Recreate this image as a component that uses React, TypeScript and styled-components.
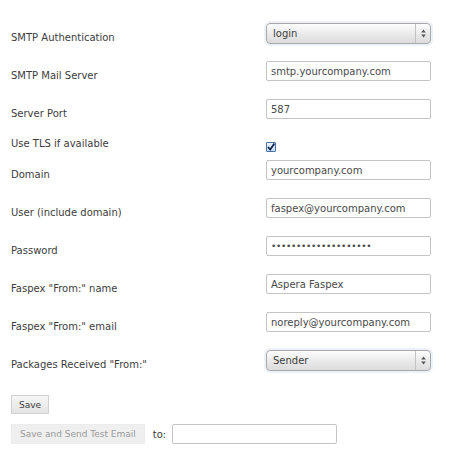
import styled, { createGlobalStyle } from 'styled-components';

const GlobalStyle = createGlobalStyle`
  html, body { margin: 0; padding: 0; background: #fff; }
  body { font-family: "DejaVu Sans", Verdana, sans-serif; font-size: 10px; color: #3d3d3d; }
`;

const Form = styled.form`
  padding: 16px 0 0 11px;
  width: 440px;
`;

const Row = styled.div<{ $compact?: boolean }>`
  display: grid;
  grid-template-columns: 255px 165px;
  height: ${p => (p.$compact ? 23 : 38)}px;
`;

const Label = styled.label<{ $compact?: boolean }>`
  padding-top: ${p => (p.$compact ? 7 : 15)}px;
  line-height: 14px;
  font-size: 10px;
  color: #3d3d3d;
`;

const Field = styled.div<{ $compact?: boolean }>`
  padding-top: ${p => (p.$compact ? 12 : 7)}px;
`;

const TextInput = styled.input`
  box-sizing: border-box;
  width: 165px;
  height: 20px;
  margin: 0;
  padding: 0 4px;
  border: 1px solid #c4c4c4;
  border-radius: 2px;
  font-family: "DejaVu Sans", Verdana, sans-serif;
  font-size: 10px;
  color: #4a4a4a;
  background: #fff;
  outline: none;
  &[type='password'] { letter-spacing: -0.3px; font-size: 9px; }
`;

const SelectBox = styled.div`
  box-sizing: border-box;
  display: flex;
  align-items: stretch;
  width: 165px;
  height: 21px;
  border: 1px solid #a9a9a9;
  border-radius: 4px;
  background: linear-gradient(#fdfdfd, #e9e9e9 55%, #dcdcdc);
  box-shadow: 0 0 0 2px rgba(214, 226, 240, 0.45);
  cursor: default;
`;

const SelectText = styled.span`
  flex: 1;
  padding-left: 6px;
  line-height: 19px;
  font-size: 10px;
  color: #3d3d3d;
`;

const SelectArrows = styled.span`
  display: flex;
  align-items: center;
  justify-content: center;
  width: 14px;
  border-left: 1px solid #c2c2c2;
`;

const CheckBox = styled.span`
  box-sizing: border-box;
  display: flex;
  align-items: center;
  justify-content: center;
  width: 10px;
  height: 10px;
  border: 1px solid #4a6fa5;
  border-radius: 1px;
  background: linear-gradient(#eaf2ff, #c9dcf5);
`;

const Actions = styled.div`
  display: flex;
  flex-direction: column;
  align-items: flex-start;
  gap: 10px;
  padding-top: 14px;
`;

const TestRow = styled.div`
  display: flex;
  align-items: center;
  gap: 8px;
`;

const Button = styled.button<{ $disabled?: boolean }>`
  box-sizing: border-box;
  height: ${p => (p.$disabled ? 20 : 19)}px;
  margin: 0;
  padding: 0 ${p => (p.$disabled ? 8 : 7)}px;
  border: 1px solid ${p => (p.$disabled ? '#ececec' : '#d0d0d0')};
  border-radius: 0;
  background: ${p => (p.$disabled ? '#efefef' : 'linear-gradient(#f6f6f6, #e4e4e4)')};
  color: ${p => (p.$disabled ? '#9a9a9a' : '#3d3d3d')};
  font-family: "DejaVu Sans", Verdana, sans-serif;
  font-size: 9px;
`;

const ToLabel = styled.span`
  margin-right: -2px;
  font-size: 10px;
  color: #3d3d3d;
`;

function Select({ value }: { value: string }) {
  return (
    <SelectBox role="listbox">
      <SelectText>{value}</SelectText>
      <SelectArrows>
        <svg width="5" height="9" viewBox="0 0 5 9">
          <path d="M2.5 0.5 L4.8 3.5 L0.2 3.5 Z" fill="#555" />
          <path d="M2.5 8.5 L4.8 5.5 L0.2 5.5 Z" fill="#555" />
        </svg>
      </SelectArrows>
    </SelectBox>
  );
}

export default function App() {
  return (
    <>
      <GlobalStyle />
      <Form onSubmit={e => e.preventDefault()}>
        <Row>
          <Label>SMTP Authentication</Label>
          <Field><Select value="login" /></Field>
        </Row>
        <Row>
          <Label>SMTP Mail Server</Label>
          <Field><TextInput defaultValue="smtp.yourcompany.com" /></Field>
        </Row>
        <Row>
          <Label>Server Port</Label>
          <Field><TextInput defaultValue="587" /></Field>
        </Row>
        <Row $compact>
          <Label $compact>Use TLS if available</Label>
          <Field $compact>
            <CheckBox role="checkbox" aria-checked="true">
              <svg width="8" height="8" viewBox="0 0 8 8">
                <path d="M1 4 L3.2 6.5 L7.4 0.6" fill="none" stroke="#14264a" strokeWidth="1.8" />
              </svg>
            </CheckBox>
          </Field>
        </Row>
        <Row>
          <Label>Domain</Label>
          <Field><TextInput defaultValue="yourcompany.com" /></Field>
        </Row>
        <Row>
          <Label>User (include domain)</Label>
          <Field><TextInput defaultValue="faspex@yourcompany.com" /></Field>
        </Row>
        <Row>
          <Label>Password</Label>
          <Field><TextInput type="password" defaultValue="xxxxxxxxxxxxxxxxxxxx" /></Field>
        </Row>
        <Row>
          <Label>Faspex "From:" name</Label>
          <Field><TextInput defaultValue="Aspera Faspex" /></Field>
        </Row>
        <Row>
          <Label>Faspex "From:" email</Label>
          <Field><TextInput defaultValue="noreply@yourcompany.com" /></Field>
        </Row>
        <Row>
          <Label>Packages Received "From:"</Label>
          <Field><Select value="Sender" /></Field>
        </Row>
        <Actions>
          <Button type="submit">Save</Button>
          <TestRow>
            <Button type="button" $disabled disabled>Save and Send Test Email</Button>
            <ToLabel>to:</ToLabel>
            <TextInput />
          </TestRow>
        </Actions>
      </Form>
    </>
  );
}
